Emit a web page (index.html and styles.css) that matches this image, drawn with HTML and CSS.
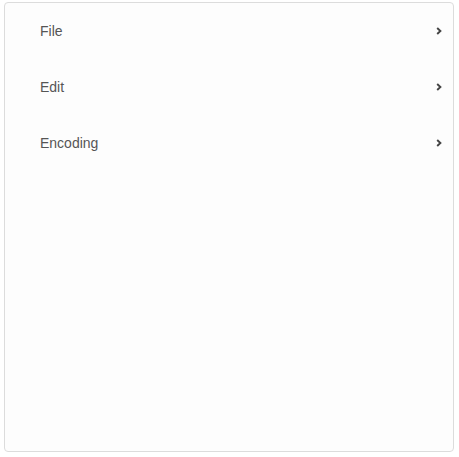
FILE: index.html
```html
<!DOCTYPE html>
<html>
<head>
<meta charset="utf-8">
<link rel="stylesheet" href="styles.css">
</head>
<body>
<div class="menu">
  <div class="item"><span class="label">File</span><svg class="chev" width="6" height="8" viewBox="0 0 6 8"><polyline points="1.2,1 4.4,4 1.2,7" fill="none" stroke="#444" stroke-width="1.9"/></svg></div>
  <div class="item"><span class="label">Edit</span><svg class="chev" width="6" height="8" viewBox="0 0 6 8"><polyline points="1.2,1 4.4,4 1.2,7" fill="none" stroke="#444" stroke-width="1.9"/></svg></div>
  <div class="item"><span class="label">Encoding</span><svg class="chev" width="6" height="8" viewBox="0 0 6 8"><polyline points="1.2,1 4.4,4 1.2,7" fill="none" stroke="#444" stroke-width="1.9"/></svg></div>
</div>
</body>
</html>
```
FILE: styles.css
```css
html, body { margin: 0; padding: 0; background: #fff; }
body { padding: 2px 0 0 4px; }
.menu {
  width: 448px;
  height: 448px;
  border: 1px solid #dcdcdc;
  border-radius: 4px;
  background: #fdfdfd;
  font-family: "Liberation Sans", Arial, sans-serif;
  font-size: 14px;
  color: #555;
}
.item {
  height: 56px;
  display: flex;
  align-items: center;
  justify-content: space-between;
  padding: 0 11px 0 35px;
}
.chev { display: block; }
```
